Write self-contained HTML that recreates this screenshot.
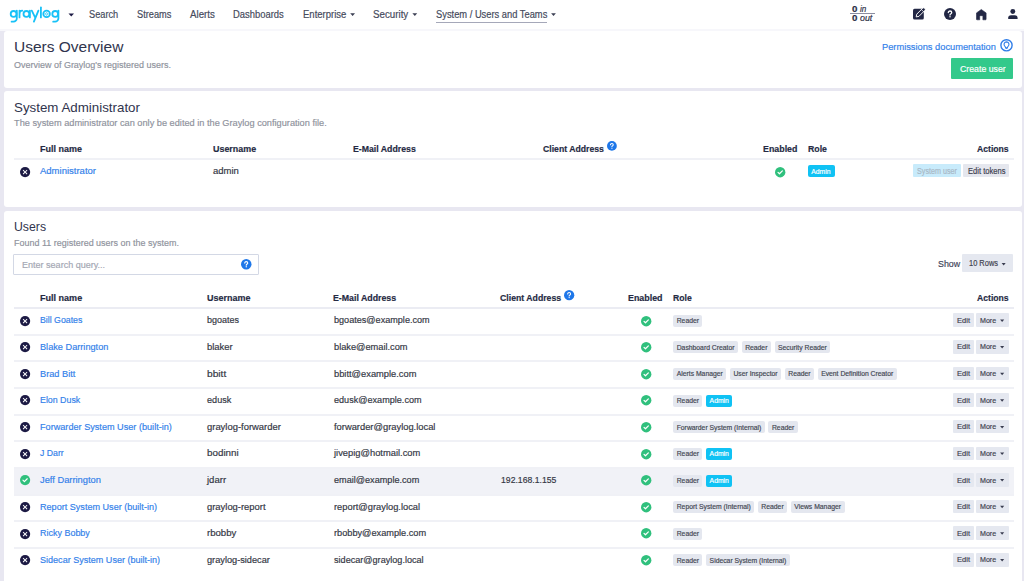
<!DOCTYPE html>
<html><head><meta charset="utf-8"><title>Users Overview</title>
<style>
html,body{margin:0;padding:0;}
body{width:1024px;height:581px;overflow:hidden;position:relative;background:#e8e7f1;font-family:"Liberation Sans",sans-serif;}
.t{position:absolute;white-space:nowrap;line-height:1;transform-origin:0 0;-webkit-text-stroke:0.18px currentColor;}
svg{position:absolute;overflow:visible;}
</style></head><body>
<div style="position:absolute;left:0px;top:0px;width:1024px;height:29px;background:#fff;z-index:1"></div>
<div style="position:absolute;left:0px;top:29px;width:1024px;height:2px;background:#f7f7fb;z-index:1"></div>
<svg style="left:0;top:0;z-index:2" width="70" height="29" viewBox="0 0 70 29"><g fill="none" stroke="#17c1f7" stroke-width="1.8" stroke-linecap="round">
<circle cx="13.6" cy="13.9" r="2.9"/><path d="M16.8 10.6 V18.4 A3.3 3.3 0 0 1 13.5 21.7 H11.6"/>
<path d="M19.5 10.6 V17.4 M19.5 14 Q19.5 10.7 22.3 10.7"/>
<circle cx="26.4" cy="13.9" r="2.9"/><path d="M29.9 10.6 V17.4"/>
<path d="M31.8 10.6 L35.1 17.3 M38.4 10.6 L33.9 21.6"/>
<path d="M40.9 7.3 V17.4"/>
<circle cx="46.6" cy="13.9" r="3.3"/>
<circle cx="55.2" cy="13.9" r="2.9"/><path d="M58.4 10.6 V18.4 A3.3 3.3 0 0 1 55.1 21.7 H53.2"/>
</g><g fill="none" stroke="#17c1f7" stroke-width="0.7"><circle cx="46.6" cy="13.9" r="1.1"/><path d="M46.6 12 V12.5 M46.6 15.3 V15.8 M44.7 13.9 H45.2 M48 13.9 H48.5"/></g></svg>
<svg style="left:0;top:0;z-index:2" width="1" height="1"><polygon points="68.5,13.6 74,13.6 71.25,16.6" fill="#1c1a44"/></svg>
<div class="t" style="left:88.80px;top:10px;font-size:10px;color:#454a5c;transform:scaleX(0.9211);z-index:2;">Search</div>
<div class="t" style="left:136.60px;top:10px;font-size:10px;color:#454a5c;transform:scaleX(0.9235);z-index:2;">Streams</div>
<div class="t" style="left:190.00px;top:10px;font-size:10px;color:#454a5c;transform:scaleX(0.9706);z-index:2;">Alerts</div>
<div class="t" style="left:233.30px;top:10px;font-size:10px;color:#454a5c;transform:scaleX(0.9406);z-index:2;">Dashboards</div>
<div class="t" style="left:302.60px;top:10px;font-size:10px;color:#454a5c;transform:scaleX(0.9518);z-index:2;">Enterprise</div>
<div class="t" style="left:373.30px;top:10px;font-size:10px;color:#454a5c;transform:scaleX(0.9751);z-index:2;">Security</div>
<div class="t" style="left:435.70px;top:10px;font-size:10px;color:#454a5c;transform:scaleX(0.9329);z-index:2;">System / Users and Teams</div>
<svg style="left:0;top:0;z-index:2" width="1" height="1"><polygon points="350.2,13.2 355.0,13.2 352.6,16.0" fill="#3a3e52"/></svg>
<svg style="left:0;top:0;z-index:2" width="1" height="1"><polygon points="412.4,13.2 417.2,13.2 414.79999999999995,16.0" fill="#3a3e52"/></svg>
<svg style="left:0;top:0;z-index:2" width="1" height="1"><polygon points="551.1,13.2 555.9,13.2 553.5,16.0" fill="#3a3e52"/></svg>
<div style="position:absolute;left:435.7px;top:22px;width:111.3px;height:1px;background:#a5a8b9;z-index:2"></div>
<div class="t" style="left:852.00px;top:5px;font-size:8.5px;color:#2b2f45;font-weight:700;transform:scaleX(1.1447);z-index:2;">0</div>
<div class="t" style="left:859.90px;top:5px;font-size:8.5px;color:#2b2f45;font-style:italic;transform:scaleX(0.9502);z-index:2;">in</div>
<div style="position:absolute;left:850px;top:13.2px;width:25px;height:1px;background:#8a8da0;z-index:2"></div>
<div class="t" style="left:852.00px;top:14px;font-size:8.5px;color:#2b2f45;font-weight:700;transform:scaleX(1.1447);z-index:2;">0</div>
<div class="t" style="left:859.90px;top:14px;font-size:8.5px;color:#2b2f45;font-style:italic;transform:scaleX(1.0402);z-index:2;">out</div>
<svg style="left:912px;top:7px;z-index:2" width="14" height="14" viewBox="0 0 14 14"><rect x="1" y="1.8" width="10.8" height="10.7" rx="1.5" fill="#222744"/><g transform="translate(4.2 9.9) rotate(-45)"><path d="M0 0 L2.3 -1.55 H10.6 A1.55 1.55 0 0 1 10.6 1.55 H2.3 Z" fill="#222744" stroke="#fff" stroke-width="0.9" stroke-linejoin="round"/><path d="M8.9 -1.6 V1.6" stroke="#fff" stroke-width="0.7"/></g></svg>
<svg style="left:943.8px;top:8px;z-index:2" width="12" height="12" viewBox="0 0 12 12"><circle cx="6" cy="6" r="6" fill="#222744"/><path d="M4.3 4.6c0-1 .8-1.6 1.7-1.6s1.7.6 1.7 1.5c0 .9-.6 1.1-1.1 1.5-.4.3-.6.5-.6 1" fill="none" stroke="#fff" stroke-width="1.3" stroke-linecap="round"/><circle cx="6" cy="8.7" r=".75" fill="#fff"/></svg>
<svg style="left:976.3px;top:8.8px;z-index:2" width="11" height="11" viewBox="0 0 11 11"><path d="M5.3 0.5 L10.1 3.9 V10.2 Q10.1 10.8 9.5 10.8 H6.9 V7.3 Q6.9 6.7 6.3 6.7 H4.3 Q3.7 6.7 3.7 7.3 V10.8 H1.1 Q0.5 10.8 0.5 10.2 V3.9 Z" fill="#222744" stroke="#222744" stroke-width="0.6" stroke-linejoin="round"/></svg>
<svg style="left:1008px;top:8.8px;z-index:2" width="10" height="10.5" viewBox="0 0 10 10.5"><circle cx="4.8" cy="2.5" r="2.45" fill="#222744"/><path d="M0.1 9.2 Q0.1 6.2 3.1 6.2 H6.7 Q9.7 6.2 9.7 9.2 Q9.7 10.1 8.8 10.1 H1 Q0.1 10.1 0.1 9.2 Z" fill="#222744"/></svg>
<div style="position:absolute;left:4px;top:30.5px;width:1018px;height:57.5px;background:#fff;border-radius:3px"></div>
<div style="position:absolute;left:4px;top:91px;width:1018px;height:116px;background:#fff;border-radius:3px"></div>
<div style="position:absolute;left:4px;top:211px;width:1018px;height:380px;background:#fff;border-radius:3px"></div>
<div class="t" style="left:14.00px;top:39px;font-size:15.5px;color:#30344d;-webkit-text-stroke:0;">Users Overview</div>
<div class="t" style="left:14.00px;top:60px;font-size:9.6px;color:#8f939d;transform:scaleX(0.9359);">Overview of Graylog's registered users.</div>
<div class="t" style="left:882.00px;top:42px;font-size:9.6px;color:#3381ea;transform:scaleX(0.9666);">Permissions documentation</div>
<svg style="left:1000px;top:39px;" width="13" height="13" viewBox="0 0 13 13"><circle cx="6.5" cy="6.3" r="5.6" fill="none" stroke="#2f7de8" stroke-width="1.4"/><path d="M6.5 2.9 a2.5 2.5 0 0 1 1.6 4.4 q-0.6 0.5 -0.7 1.5 h-1.8 q-0.1 -1 -0.7 -1.5 a2.5 2.5 0 0 1 1.6 -4.4 z" fill="none" stroke="#2f7de8" stroke-width="1.1"/><path d="M5.6 9.5 h1.8" stroke="#2f7de8" stroke-width="0.9"/></svg>
<div style="position:absolute;left:951px;top:58px;width:62px;height:21px;background:#33c98b;border-radius:1px"></div>
<div class="t" style="left:959.70px;top:64px;font-size:9.4px;color:#fff;transform:scaleX(0.9345);">Create user</div>
<div class="t" style="left:14.00px;top:101px;font-size:13px;color:#30344d;transform:scaleX(1.0256);-webkit-text-stroke:0;">System Administrator</div>
<div class="t" style="left:14.00px;top:118px;font-size:9.6px;color:#8f939d;transform:scaleX(0.9599);">The system administrator can only be edited in the Graylog configuration file.</div>
<div class="t" style="left:40.00px;top:144px;font-size:9.4px;color:#252a43;font-weight:700;transform:scaleX(0.9568);">Full name</div>
<div class="t" style="left:212.50px;top:144px;font-size:9.4px;color:#252a43;font-weight:700;transform:scaleX(0.9505);">Username</div>
<div class="t" style="left:352.70px;top:144px;font-size:9.4px;color:#252a43;font-weight:700;transform:scaleX(0.9313);">E-Mail Address</div>
<div class="t" style="left:543.40px;top:144px;font-size:9.4px;color:#252a43;font-weight:700;transform:scaleX(0.9244);">Client Address</div>
<svg style="left:606.5px;top:141.1px;" width="9.8" height="9.8" viewBox="0 0 10 10"><circle cx="5" cy="5" r="5" fill="#1e77e9"/><path d="M3.6 3.9c0-.9.6-1.4 1.4-1.4s1.4.5 1.4 1.3c0 .8-.5.9-.9 1.2-.35.25-.5.45-.5.9" fill="none" stroke="#fff" stroke-width="1.05" stroke-linecap="round"/><circle cx="5" cy="7.4" r=".62" fill="#fff"/></svg>
<div class="t" style="left:763.00px;top:144px;font-size:9.4px;color:#252a43;font-weight:700;transform:scaleX(0.9435);">Enabled</div>
<div class="t" style="left:808.00px;top:144px;font-size:9.4px;color:#252a43;font-weight:700;transform:scaleX(0.9336);">Role</div>
<div class="t" style="left:976.80px;top:144px;font-size:9.4px;color:#252a43;font-weight:700;transform:scaleX(0.9201);">Actions</div>
<div style="position:absolute;left:14px;top:158px;width:1000px;height:2px;background:#f0f1f6;"></div>
<svg style="left:19.700000000000003px;top:166.5px;" width="10.2" height="10.2" viewBox="0 0 10 10"><circle cx="5" cy="5" r="5" fill="#1c1a44"/><path d="M3.4 2.7 L5 4.3 L6.6 2.7 L7.3 3.4 L5.7 5 L7.3 6.6 L6.6 7.3 L5 5.7 L3.4 7.3 L2.7 6.6 L4.3 5 L2.7 3.4 Z" fill="#fff"/></svg>
<div class="t" style="left:40.00px;top:166px;font-size:9.6px;color:#3381ea;transform:scaleX(0.9904);">Administrator</div>
<div class="t" style="left:212.50px;top:166px;font-size:9.6px;color:#343744;transform:scaleX(0.9901);">admin</div>
<svg style="left:775.4px;top:166.5px;" width="10.4" height="10.4" viewBox="0 0 10 10"><circle cx="5" cy="5" r="5" fill="#30c07d"/><path d="M2.9 5.1 L4.3 6.5 L7.1 3.7" fill="none" stroke="#fff" stroke-width="1.15" stroke-linecap="round" stroke-linejoin="round"/></svg>
<div style="position:absolute;left:808px;top:165.3px;width:27px;height:12.2px;background:#10c2f4;border-radius:2px"></div>
<div class="t" style="left:811.30px;top:169px;font-size:6.8px;color:#fff;">Admin</div>
<div style="position:absolute;left:912.9px;top:164.4px;width:47.8px;height:12.8px;background:#c8ebfb;border-radius:1px"></div>
<div class="t" style="left:916.80px;top:167px;font-size:8.5px;color:#a8b8c6;transform:scaleX(0.8450);">System user</div>
<div style="position:absolute;left:963.2px;top:164.4px;width:45.7px;height:12.8px;background:#e5e7ee;border-radius:1px"></div>
<div class="t" style="left:967.60px;top:167px;font-size:8.5px;color:#3f4250;transform:scaleX(0.8898);">Edit tokens</div>
<div class="t" style="left:14.00px;top:220px;font-size:13px;color:#30344d;transform:scaleX(0.9431);-webkit-text-stroke:0;">Users</div>
<div class="t" style="left:14.00px;top:238px;font-size:9.6px;color:#8f939d;transform:scaleX(0.9351);">Found 11 registered users on the system.</div>
<div style="position:absolute;left:13px;top:254px;width:246px;height:21px;background:#fff;box-sizing:border-box;border:1px solid #d3d8e5;border-radius:1px"></div>
<div class="t" style="left:22.00px;top:260px;font-size:9.6px;color:#a3a7b3;transform:scaleX(0.9410);">Enter search query...</div>
<svg style="left:240.85px;top:258.95px;" width="10.5" height="10.5" viewBox="0 0 10 10"><circle cx="5" cy="5" r="5" fill="#1e77e9"/><path d="M3.6 3.9c0-.9.6-1.4 1.4-1.4s1.4.5 1.4 1.3c0 .8-.5.9-.9 1.2-.35.25-.5.45-.5.9" fill="none" stroke="#fff" stroke-width="1.05" stroke-linecap="round"/><circle cx="5" cy="7.4" r=".62" fill="#fff"/></svg>
<div class="t" style="left:937.70px;top:259px;font-size:9.6px;color:#3f4458;transform:scaleX(0.9232);">Show</div>
<div style="position:absolute;left:962px;top:254.2px;width:51.3px;height:17.5px;background:#e5e8f0;border-radius:1px"></div>
<div class="t" style="left:969.10px;top:259px;font-size:8.8px;color:#3f424f;transform:scaleX(0.8472);">10 Rows</div>
<svg style="left:0;top:0;z-index:2" width="1" height="1"><polygon points="1001.6,263.1 1005.7,263.1 1003.6500000000001,265.6" fill="#3a3d50"/></svg>
<div class="t" style="left:40.00px;top:293px;font-size:9.4px;color:#252a43;font-weight:700;transform:scaleX(0.9636);">Full name</div>
<div class="t" style="left:207.00px;top:293px;font-size:9.4px;color:#252a43;font-weight:700;transform:scaleX(0.9571);">Username</div>
<div class="t" style="left:333.20px;top:293px;font-size:9.4px;color:#252a43;font-weight:700;transform:scaleX(0.9372);">E-Mail Address</div>
<div class="t" style="left:500.40px;top:293px;font-size:9.4px;color:#252a43;font-weight:700;transform:scaleX(0.9290);">Client Address</div>
<svg style="left:563.85px;top:289.75px;" width="10.3" height="10.3" viewBox="0 0 10 10"><circle cx="5" cy="5" r="5" fill="#1e77e9"/><path d="M3.6 3.9c0-.9.6-1.4 1.4-1.4s1.4.5 1.4 1.3c0 .8-.5.9-.9 1.2-.35.25-.5.45-.5.9" fill="none" stroke="#fff" stroke-width="1.05" stroke-linecap="round"/><circle cx="5" cy="7.4" r=".62" fill="#fff"/></svg>
<div class="t" style="left:628.10px;top:293px;font-size:9.4px;color:#252a43;font-weight:700;transform:scaleX(0.9462);">Enabled</div>
<div class="t" style="left:673.20px;top:293px;font-size:9.4px;color:#252a43;font-weight:700;transform:scaleX(0.9238);">Role</div>
<div class="t" style="left:976.80px;top:293px;font-size:9.4px;color:#252a43;font-weight:700;transform:scaleX(0.9201);">Actions</div>
<div style="position:absolute;left:14px;top:307px;width:1000px;height:2px;background:#ebecf3;"></div>
<svg style="left:19.700000000000003px;top:315.59999999999997px;" width="10.2" height="10.2" viewBox="0 0 10 10"><circle cx="5" cy="5" r="5" fill="#1c1a44"/><path d="M3.4 2.7 L5 4.3 L6.6 2.7 L7.3 3.4 L5.7 5 L7.3 6.6 L6.6 7.3 L5 5.7 L3.4 7.3 L2.7 6.6 L4.3 5 L2.7 3.4 Z" fill="#fff"/></svg>
<div class="t" style="left:40.40px;top:315px;font-size:9.6px;color:#3381ea;transform:scaleX(0.9135);">Bill Goates</div>
<div class="t" style="left:207.00px;top:315px;font-size:9.6px;color:#343744;transform:scaleX(0.9363);">bgoates</div>
<div class="t" style="left:333.50px;top:315px;font-size:9.6px;color:#343744;transform:scaleX(0.9476);">bgoates@example.com</div>
<svg style="left:640.5px;top:315.5px;" width="10.4" height="10.4" viewBox="0 0 10 10"><circle cx="5" cy="5" r="5" fill="#30c07d"/><path d="M2.9 5.1 L4.3 6.5 L7.1 3.7" fill="none" stroke="#fff" stroke-width="1.15" stroke-linecap="round" stroke-linejoin="round"/></svg>
<div style="position:absolute;left:673.2px;top:314.8px;width:29.3px;height:12px;background:#e4e7ef;border-radius:2px"></div>
<div class="t" style="left:676.70px;top:318px;font-size:6.8px;color:#444854;">Reader</div>
<div style="position:absolute;left:953px;top:313.4px;width:20.6px;height:13.6px;background:#e5e8f0;border-radius:1px"></div>
<div class="t" style="left:956.60px;top:317px;font-size:7.9px;color:#3f424f;transform:scaleX(0.9540);">Edit</div>
<div style="position:absolute;left:976.2px;top:313.4px;width:32.6px;height:13.6px;background:#e5e8f0;border-radius:1px"></div>
<div class="t" style="left:979.90px;top:317px;font-size:7.9px;color:#3f424f;transform:scaleX(0.8994);">More</div>
<svg style="left:0;top:0;z-index:2" width="1" height="1"><polygon points="1000.1,319.40000000000003 1004.2,319.40000000000003 1002.1500000000001,321.90000000000003" fill="#3a3d50"/></svg>
<div style="position:absolute;left:14px;top:334px;width:1000px;height:2px;background:#f0f1f6;"></div>
<svg style="left:19.700000000000003px;top:342.21999999999997px;" width="10.2" height="10.2" viewBox="0 0 10 10"><circle cx="5" cy="5" r="5" fill="#1c1a44"/><path d="M3.4 2.7 L5 4.3 L6.6 2.7 L7.3 3.4 L5.7 5 L7.3 6.6 L6.6 7.3 L5 5.7 L3.4 7.3 L2.7 6.6 L4.3 5 L2.7 3.4 Z" fill="#fff"/></svg>
<div class="t" style="left:40.40px;top:342px;font-size:9.6px;color:#3381ea;transform:scaleX(0.9564);">Blake Darrington</div>
<div class="t" style="left:207.00px;top:342px;font-size:9.6px;color:#343744;transform:scaleX(0.9824);">blaker</div>
<div class="t" style="left:333.50px;top:342px;font-size:9.6px;color:#343744;transform:scaleX(0.9625);">blake@email.com</div>
<svg style="left:640.5px;top:342.12px;" width="10.4" height="10.4" viewBox="0 0 10 10"><circle cx="5" cy="5" r="5" fill="#30c07d"/><path d="M2.9 5.1 L4.3 6.5 L7.1 3.7" fill="none" stroke="#fff" stroke-width="1.15" stroke-linecap="round" stroke-linejoin="round"/></svg>
<div style="position:absolute;left:673.2px;top:341.42px;width:64.83px;height:12px;background:#e4e7ef;border-radius:2px"></div>
<div class="t" style="left:676.70px;top:345px;font-size:6.8px;color:#444854;">Dashboard Creator</div>
<div style="position:absolute;left:741.631875px;top:341.42px;width:29.3px;height:12px;background:#e4e7ef;border-radius:2px"></div>
<div class="t" style="left:745.13px;top:345px;font-size:6.8px;color:#444854;">Reader</div>
<div style="position:absolute;left:774.53534375px;top:341.42px;width:55.76px;height:12px;background:#e4e7ef;border-radius:2px"></div>
<div class="t" style="left:778.04px;top:345px;font-size:6.8px;color:#444854;">Security Reader</div>
<div style="position:absolute;left:953px;top:340.02px;width:20.6px;height:13.6px;background:#e5e8f0;border-radius:1px"></div>
<div class="t" style="left:956.60px;top:343px;font-size:7.9px;color:#3f424f;transform:scaleX(0.9540);">Edit</div>
<div style="position:absolute;left:976.2px;top:340.02px;width:32.6px;height:13.6px;background:#e5e8f0;border-radius:1px"></div>
<div class="t" style="left:979.90px;top:343px;font-size:7.9px;color:#3f424f;transform:scaleX(0.8994);">More</div>
<svg style="left:0;top:0;z-index:2" width="1" height="1"><polygon points="1000.1,346.02000000000004 1004.2,346.02000000000004 1002.1500000000001,348.52000000000004" fill="#3a3d50"/></svg>
<div style="position:absolute;left:14px;top:360px;width:1000px;height:2px;background:#f0f1f6;"></div>
<svg style="left:19.700000000000003px;top:368.84px;" width="10.2" height="10.2" viewBox="0 0 10 10"><circle cx="5" cy="5" r="5" fill="#1c1a44"/><path d="M3.4 2.7 L5 4.3 L6.6 2.7 L7.3 3.4 L5.7 5 L7.3 6.6 L6.6 7.3 L5 5.7 L3.4 7.3 L2.7 6.6 L4.3 5 L2.7 3.4 Z" fill="#fff"/></svg>
<div class="t" style="left:40.40px;top:369px;font-size:9.6px;color:#3381ea;transform:scaleX(0.9615);">Brad Bitt</div>
<div class="t" style="left:207.00px;top:369px;font-size:9.6px;color:#343744;transform:scaleX(1.0637);">bbitt</div>
<div class="t" style="left:333.50px;top:369px;font-size:9.6px;color:#343744;transform:scaleX(0.9710);">bbitt@example.com</div>
<svg style="left:640.5px;top:368.74px;" width="10.4" height="10.4" viewBox="0 0 10 10"><circle cx="5" cy="5" r="5" fill="#30c07d"/><path d="M2.9 5.1 L4.3 6.5 L7.1 3.7" fill="none" stroke="#fff" stroke-width="1.15" stroke-linecap="round" stroke-linejoin="round"/></svg>
<div style="position:absolute;left:673.2px;top:368.04px;width:53.11px;height:12px;background:#e4e7ef;border-radius:2px"></div>
<div class="t" style="left:676.70px;top:371px;font-size:6.8px;color:#444854;">Alerts Manager</div>
<div style="position:absolute;left:729.91090625px;top:368.04px;width:51.22px;height:12px;background:#e4e7ef;border-radius:2px"></div>
<div class="t" style="left:733.41px;top:371px;font-size:6.8px;color:#444854;">User Inspector</div>
<div style="position:absolute;left:784.7284375px;top:368.04px;width:29.3px;height:12px;background:#e4e7ef;border-radius:2px"></div>
<div class="t" style="left:788.23px;top:371px;font-size:6.8px;color:#444854;">Reader</div>
<div style="position:absolute;left:817.63190625px;top:368.04px;width:79.19px;height:12px;background:#e4e7ef;border-radius:2px"></div>
<div class="t" style="left:821.13px;top:371px;font-size:6.8px;color:#444854;">Event Definition Creator</div>
<div style="position:absolute;left:953px;top:366.64px;width:20.6px;height:13.6px;background:#e5e8f0;border-radius:1px"></div>
<div class="t" style="left:956.60px;top:370px;font-size:7.9px;color:#3f424f;transform:scaleX(0.9540);">Edit</div>
<div style="position:absolute;left:976.2px;top:366.64px;width:32.6px;height:13.6px;background:#e5e8f0;border-radius:1px"></div>
<div class="t" style="left:979.90px;top:370px;font-size:7.9px;color:#3f424f;transform:scaleX(0.8994);">More</div>
<svg style="left:0;top:0;z-index:2" width="1" height="1"><polygon points="1000.1,372.64000000000004 1004.2,372.64000000000004 1002.1500000000001,375.14000000000004" fill="#3a3d50"/></svg>
<div style="position:absolute;left:14px;top:387px;width:1000px;height:2px;background:#f0f1f6;"></div>
<svg style="left:19.700000000000003px;top:395.46px;" width="10.2" height="10.2" viewBox="0 0 10 10"><circle cx="5" cy="5" r="5" fill="#1c1a44"/><path d="M3.4 2.7 L5 4.3 L6.6 2.7 L7.3 3.4 L5.7 5 L7.3 6.6 L6.6 7.3 L5 5.7 L3.4 7.3 L2.7 6.6 L4.3 5 L2.7 3.4 Z" fill="#fff"/></svg>
<div class="t" style="left:40.40px;top:395px;font-size:9.6px;color:#3381ea;transform:scaleX(0.9196);">Elon Dusk</div>
<div class="t" style="left:207.00px;top:395px;font-size:9.6px;color:#343744;transform:scaleX(0.9502);">edusk</div>
<div class="t" style="left:333.50px;top:395px;font-size:9.6px;color:#343744;transform:scaleX(0.9476);">edusk@example.com</div>
<svg style="left:640.5px;top:395.36px;" width="10.4" height="10.4" viewBox="0 0 10 10"><circle cx="5" cy="5" r="5" fill="#30c07d"/><path d="M2.9 5.1 L4.3 6.5 L7.1 3.7" fill="none" stroke="#fff" stroke-width="1.15" stroke-linecap="round" stroke-linejoin="round"/></svg>
<div style="position:absolute;left:673.2px;top:394.66px;width:29.3px;height:12px;background:#e4e7ef;border-radius:2px"></div>
<div class="t" style="left:676.70px;top:398px;font-size:6.8px;color:#444854;">Reader</div>
<div style="position:absolute;left:706.10346875px;top:394.66px;width:26.28px;height:12px;background:#10c2f4;border-radius:2px"></div>
<div class="t" style="left:709.60px;top:398px;font-size:6.8px;color:#fff;">Admin</div>
<div style="position:absolute;left:953px;top:393.26px;width:20.6px;height:13.6px;background:#e5e8f0;border-radius:1px"></div>
<div class="t" style="left:956.60px;top:397px;font-size:7.9px;color:#3f424f;transform:scaleX(0.9540);">Edit</div>
<div style="position:absolute;left:976.2px;top:393.26px;width:32.6px;height:13.6px;background:#e5e8f0;border-radius:1px"></div>
<div class="t" style="left:979.90px;top:397px;font-size:7.9px;color:#3f424f;transform:scaleX(0.8994);">More</div>
<svg style="left:0;top:0;z-index:2" width="1" height="1"><polygon points="1000.1,399.26000000000005 1004.2,399.26000000000005 1002.1500000000001,401.76000000000005" fill="#3a3d50"/></svg>
<div style="position:absolute;left:14px;top:414px;width:1000px;height:2px;background:#f0f1f6;"></div>
<svg style="left:19.700000000000003px;top:422.08px;" width="10.2" height="10.2" viewBox="0 0 10 10"><circle cx="5" cy="5" r="5" fill="#1c1a44"/><path d="M3.4 2.7 L5 4.3 L6.6 2.7 L7.3 3.4 L5.7 5 L7.3 6.6 L6.6 7.3 L5 5.7 L3.4 7.3 L2.7 6.6 L4.3 5 L2.7 3.4 Z" fill="#fff"/></svg>
<div class="t" style="left:40.40px;top:422px;font-size:9.6px;color:#3381ea;transform:scaleX(0.9516);">Forwarder System User (built-in)</div>
<div class="t" style="left:207.00px;top:422px;font-size:9.6px;color:#343744;transform:scaleX(0.9825);">graylog-forwarder</div>
<div class="t" style="left:333.50px;top:422px;font-size:9.6px;color:#343744;transform:scaleX(0.9740);">forwarder@graylog.local</div>
<svg style="left:640.5px;top:421.98px;" width="10.4" height="10.4" viewBox="0 0 10 10"><circle cx="5" cy="5" r="5" fill="#30c07d"/><path d="M2.9 5.1 L4.3 6.5 L7.1 3.7" fill="none" stroke="#fff" stroke-width="1.15" stroke-linecap="round" stroke-linejoin="round"/></svg>
<div style="position:absolute;left:673.2px;top:421.28000000000003px;width:91.65px;height:12px;background:#e4e7ef;border-radius:2px"></div>
<div class="t" style="left:676.70px;top:425px;font-size:6.8px;color:#444854;">Forwarder System (Internal)</div>
<div style="position:absolute;left:768.44778125px;top:421.28000000000003px;width:29.3px;height:12px;background:#e4e7ef;border-radius:2px"></div>
<div class="t" style="left:771.95px;top:425px;font-size:6.8px;color:#444854;">Reader</div>
<div style="position:absolute;left:953px;top:419.88px;width:20.6px;height:13.6px;background:#e5e8f0;border-radius:1px"></div>
<div class="t" style="left:956.60px;top:423px;font-size:7.9px;color:#3f424f;transform:scaleX(0.9540);">Edit</div>
<div style="position:absolute;left:976.2px;top:419.88px;width:32.6px;height:13.6px;background:#e5e8f0;border-radius:1px"></div>
<div class="t" style="left:979.90px;top:423px;font-size:7.9px;color:#3f424f;transform:scaleX(0.8994);">More</div>
<svg style="left:0;top:0;z-index:2" width="1" height="1"><polygon points="1000.1,425.88000000000005 1004.2,425.88000000000005 1002.1500000000001,428.38000000000005" fill="#3a3d50"/></svg>
<div style="position:absolute;left:14px;top:440px;width:1000px;height:2px;background:#f0f1f6;"></div>
<svg style="left:19.700000000000003px;top:448.69999999999993px;" width="10.2" height="10.2" viewBox="0 0 10 10"><circle cx="5" cy="5" r="5" fill="#1c1a44"/><path d="M3.4 2.7 L5 4.3 L6.6 2.7 L7.3 3.4 L5.7 5 L7.3 6.6 L6.6 7.3 L5 5.7 L3.4 7.3 L2.7 6.6 L4.3 5 L2.7 3.4 Z" fill="#fff"/></svg>
<div class="t" style="left:40.40px;top:448px;font-size:9.6px;color:#3381ea;transform:scaleX(0.9076);">J Darr</div>
<div class="t" style="left:207.00px;top:448px;font-size:9.6px;color:#343744;transform:scaleX(1.0239);">bodinni</div>
<div class="t" style="left:333.73px;top:448px;font-size:9.6px;color:#343744;transform:scaleX(0.9736);">jivepig@hotmail.com</div>
<svg style="left:640.5px;top:448.59999999999997px;" width="10.4" height="10.4" viewBox="0 0 10 10"><circle cx="5" cy="5" r="5" fill="#30c07d"/><path d="M2.9 5.1 L4.3 6.5 L7.1 3.7" fill="none" stroke="#fff" stroke-width="1.15" stroke-linecap="round" stroke-linejoin="round"/></svg>
<div style="position:absolute;left:673.2px;top:447.9px;width:29.3px;height:12px;background:#e4e7ef;border-radius:2px"></div>
<div class="t" style="left:676.70px;top:451px;font-size:6.8px;color:#444854;">Reader</div>
<div style="position:absolute;left:706.10346875px;top:447.9px;width:26.28px;height:12px;background:#10c2f4;border-radius:2px"></div>
<div class="t" style="left:709.60px;top:451px;font-size:6.8px;color:#fff;">Admin</div>
<div style="position:absolute;left:953px;top:446.49999999999994px;width:20.6px;height:13.6px;background:#e5e8f0;border-radius:1px"></div>
<div class="t" style="left:956.60px;top:450px;font-size:7.9px;color:#3f424f;transform:scaleX(0.9540);">Edit</div>
<div style="position:absolute;left:976.2px;top:446.49999999999994px;width:32.6px;height:13.6px;background:#e5e8f0;border-radius:1px"></div>
<div class="t" style="left:979.90px;top:450px;font-size:7.9px;color:#3f424f;transform:scaleX(0.8994);">More</div>
<svg style="left:0;top:0;z-index:2" width="1" height="1"><polygon points="1000.1,452.5 1004.2,452.5 1002.1500000000001,455.0" fill="#3a3d50"/></svg>
<div style="position:absolute;left:14px;top:469px;width:1000px;height:25px;background:#f1f2f7;"></div>
<div style="position:absolute;left:14px;top:467px;width:1000px;height:2px;background:#f0f1f6;"></div>
<svg style="left:19.700000000000003px;top:475.31999999999994px;" width="10.2" height="10.2" viewBox="0 0 10 10"><circle cx="5" cy="5" r="5" fill="#30c07d"/><path d="M2.9 5.1 L4.3 6.5 L7.1 3.7" fill="none" stroke="#fff" stroke-width="1.15" stroke-linecap="round" stroke-linejoin="round"/></svg>
<div class="t" style="left:40.40px;top:475px;font-size:9.6px;color:#3381ea;transform:scaleX(0.9700);">Jeff Darrington</div>
<div class="t" style="left:207.24px;top:475px;font-size:9.6px;color:#343744;transform:scaleX(0.9928);">jdarr</div>
<div class="t" style="left:333.50px;top:475px;font-size:9.6px;color:#343744;transform:scaleX(0.9503);">email@example.com</div>
<div class="t" style="left:500.50px;top:475px;font-size:9.6px;color:#343744;transform:scaleX(0.9024);">192.168.1.155</div>
<svg style="left:640.5px;top:475.21999999999997px;" width="10.4" height="10.4" viewBox="0 0 10 10"><circle cx="5" cy="5" r="5" fill="#30c07d"/><path d="M2.9 5.1 L4.3 6.5 L7.1 3.7" fill="none" stroke="#fff" stroke-width="1.15" stroke-linecap="round" stroke-linejoin="round"/></svg>
<div style="position:absolute;left:673.2px;top:474.52px;width:29.3px;height:12px;background:#e4e7ef;border-radius:2px"></div>
<div class="t" style="left:676.70px;top:478px;font-size:6.8px;color:#444854;">Reader</div>
<div style="position:absolute;left:706.10346875px;top:474.52px;width:26.28px;height:12px;background:#10c2f4;border-radius:2px"></div>
<div class="t" style="left:709.60px;top:478px;font-size:6.8px;color:#fff;">Admin</div>
<div style="position:absolute;left:953px;top:473.11999999999995px;width:20.6px;height:13.6px;background:#e5e8f0;border-radius:1px"></div>
<div class="t" style="left:956.60px;top:477px;font-size:7.9px;color:#3f424f;transform:scaleX(0.9540);">Edit</div>
<div style="position:absolute;left:976.2px;top:473.11999999999995px;width:32.6px;height:13.6px;background:#e5e8f0;border-radius:1px"></div>
<div class="t" style="left:979.90px;top:477px;font-size:7.9px;color:#3f424f;transform:scaleX(0.8994);">More</div>
<svg style="left:0;top:0;z-index:2" width="1" height="1"><polygon points="1000.1,479.12 1004.2,479.12 1002.1500000000001,481.62" fill="#3a3d50"/></svg>
<div style="position:absolute;left:14px;top:494px;width:1000px;height:2px;background:#f0f1f6;"></div>
<svg style="left:19.700000000000003px;top:501.93999999999994px;" width="10.2" height="10.2" viewBox="0 0 10 10"><circle cx="5" cy="5" r="5" fill="#1c1a44"/><path d="M3.4 2.7 L5 4.3 L6.6 2.7 L7.3 3.4 L5.7 5 L7.3 6.6 L6.6 7.3 L5 5.7 L3.4 7.3 L2.7 6.6 L4.3 5 L2.7 3.4 Z" fill="#fff"/></svg>
<div class="t" style="left:40.40px;top:502px;font-size:9.6px;color:#3381ea;transform:scaleX(0.9459);">Report System User (built-in)</div>
<div class="t" style="left:207.00px;top:502px;font-size:9.6px;color:#343744;transform:scaleX(0.9806);">graylog-report</div>
<div class="t" style="left:333.50px;top:502px;font-size:9.6px;color:#343744;transform:scaleX(0.9706);">report@graylog.local</div>
<svg style="left:640.5px;top:501.84px;" width="10.4" height="10.4" viewBox="0 0 10 10"><circle cx="5" cy="5" r="5" fill="#30c07d"/><path d="M2.9 5.1 L4.3 6.5 L7.1 3.7" fill="none" stroke="#fff" stroke-width="1.15" stroke-linecap="round" stroke-linejoin="round"/></svg>
<div style="position:absolute;left:673.2px;top:501.14px;width:81.07px;height:12px;background:#e4e7ef;border-radius:2px"></div>
<div class="t" style="left:676.70px;top:504px;font-size:6.8px;color:#444854;">Report System (Internal)</div>
<div style="position:absolute;left:757.87165625px;top:501.14px;width:29.3px;height:12px;background:#e4e7ef;border-radius:2px"></div>
<div class="t" style="left:761.37px;top:504px;font-size:6.8px;color:#444854;">Reader</div>
<div style="position:absolute;left:790.775125px;top:501.14px;width:53.75px;height:12px;background:#e4e7ef;border-radius:2px"></div>
<div class="t" style="left:794.28px;top:504px;font-size:6.8px;color:#444854;">Views Manager</div>
<div style="position:absolute;left:953px;top:499.73999999999995px;width:20.6px;height:13.6px;background:#e5e8f0;border-radius:1px"></div>
<div class="t" style="left:956.60px;top:503px;font-size:7.9px;color:#3f424f;transform:scaleX(0.9540);">Edit</div>
<div style="position:absolute;left:976.2px;top:499.73999999999995px;width:32.6px;height:13.6px;background:#e5e8f0;border-radius:1px"></div>
<div class="t" style="left:979.90px;top:503px;font-size:7.9px;color:#3f424f;transform:scaleX(0.8994);">More</div>
<svg style="left:0;top:0;z-index:2" width="1" height="1"><polygon points="1000.1,505.74 1004.2,505.74 1002.1500000000001,508.24" fill="#3a3d50"/></svg>
<div style="position:absolute;left:14px;top:520px;width:1000px;height:2px;background:#f0f1f6;"></div>
<svg style="left:19.700000000000003px;top:528.56px;" width="10.2" height="10.2" viewBox="0 0 10 10"><circle cx="5" cy="5" r="5" fill="#1c1a44"/><path d="M3.4 2.7 L5 4.3 L6.6 2.7 L7.3 3.4 L5.7 5 L7.3 6.6 L6.6 7.3 L5 5.7 L3.4 7.3 L2.7 6.6 L4.3 5 L2.7 3.4 Z" fill="#fff"/></svg>
<div class="t" style="left:40.40px;top:528px;font-size:9.6px;color:#3381ea;transform:scaleX(0.9349);">Ricky Bobby</div>
<div class="t" style="left:207.00px;top:528px;font-size:9.6px;color:#343744;">rbobby</div>
<div class="t" style="left:333.50px;top:528px;font-size:9.6px;color:#343744;transform:scaleX(0.9585);">rbobby@example.com</div>
<svg style="left:640.5px;top:528.4599999999999px;" width="10.4" height="10.4" viewBox="0 0 10 10"><circle cx="5" cy="5" r="5" fill="#30c07d"/><path d="M2.9 5.1 L4.3 6.5 L7.1 3.7" fill="none" stroke="#fff" stroke-width="1.15" stroke-linecap="round" stroke-linejoin="round"/></svg>
<div style="position:absolute;left:673.2px;top:527.76px;width:29.3px;height:12px;background:#e4e7ef;border-radius:2px"></div>
<div class="t" style="left:676.70px;top:531px;font-size:6.8px;color:#444854;">Reader</div>
<div style="position:absolute;left:953px;top:526.36px;width:20.6px;height:13.6px;background:#e5e8f0;border-radius:1px"></div>
<div class="t" style="left:956.60px;top:530px;font-size:7.9px;color:#3f424f;transform:scaleX(0.9540);">Edit</div>
<div style="position:absolute;left:976.2px;top:526.36px;width:32.6px;height:13.6px;background:#e5e8f0;border-radius:1px"></div>
<div class="t" style="left:979.90px;top:530px;font-size:7.9px;color:#3f424f;transform:scaleX(0.8994);">More</div>
<svg style="left:0;top:0;z-index:2" width="1" height="1"><polygon points="1000.1,532.36 1004.2,532.36 1002.1500000000001,534.86" fill="#3a3d50"/></svg>
<div style="position:absolute;left:14px;top:547px;width:1000px;height:2px;background:#f0f1f6;"></div>
<svg style="left:19.700000000000003px;top:555.18px;" width="10.2" height="10.2" viewBox="0 0 10 10"><circle cx="5" cy="5" r="5" fill="#1c1a44"/><path d="M3.4 2.7 L5 4.3 L6.6 2.7 L7.3 3.4 L5.7 5 L7.3 6.6 L6.6 7.3 L5 5.7 L3.4 7.3 L2.7 6.6 L4.3 5 L2.7 3.4 Z" fill="#fff"/></svg>
<div class="t" style="left:40.40px;top:555px;font-size:9.6px;color:#3381ea;transform:scaleX(0.9428);">Sidecar System User (built-in)</div>
<div class="t" style="left:207.00px;top:555px;font-size:9.6px;color:#343744;transform:scaleX(0.9586);">graylog-sidecar</div>
<div class="t" style="left:333.50px;top:555px;font-size:9.6px;color:#343744;transform:scaleX(0.9481);">sidecar@graylog.local</div>
<svg style="left:640.5px;top:555.0799999999999px;" width="10.4" height="10.4" viewBox="0 0 10 10"><circle cx="5" cy="5" r="5" fill="#30c07d"/><path d="M2.9 5.1 L4.3 6.5 L7.1 3.7" fill="none" stroke="#fff" stroke-width="1.15" stroke-linecap="round" stroke-linejoin="round"/></svg>
<div style="position:absolute;left:673.2px;top:554.38px;width:29.3px;height:12px;background:#e4e7ef;border-radius:2px"></div>
<div class="t" style="left:676.70px;top:558px;font-size:6.8px;color:#444854;">Reader</div>
<div style="position:absolute;left:706.10346875px;top:554.38px;width:83.72px;height:12px;background:#e4e7ef;border-radius:2px"></div>
<div class="t" style="left:709.60px;top:558px;font-size:6.8px;color:#444854;">Sidecar System (Internal)</div>
<div style="position:absolute;left:953px;top:552.98px;width:20.6px;height:13.6px;background:#e5e8f0;border-radius:1px"></div>
<div class="t" style="left:956.60px;top:556px;font-size:7.9px;color:#3f424f;transform:scaleX(0.9540);">Edit</div>
<div style="position:absolute;left:976.2px;top:552.98px;width:32.6px;height:13.6px;background:#e5e8f0;border-radius:1px"></div>
<div class="t" style="left:979.90px;top:556px;font-size:7.9px;color:#3f424f;transform:scaleX(0.8994);">More</div>
<svg style="left:0;top:0;z-index:2" width="1" height="1"><polygon points="1000.1,558.98 1004.2,558.98 1002.1500000000001,561.48" fill="#3a3d50"/></svg>
</body></html>
